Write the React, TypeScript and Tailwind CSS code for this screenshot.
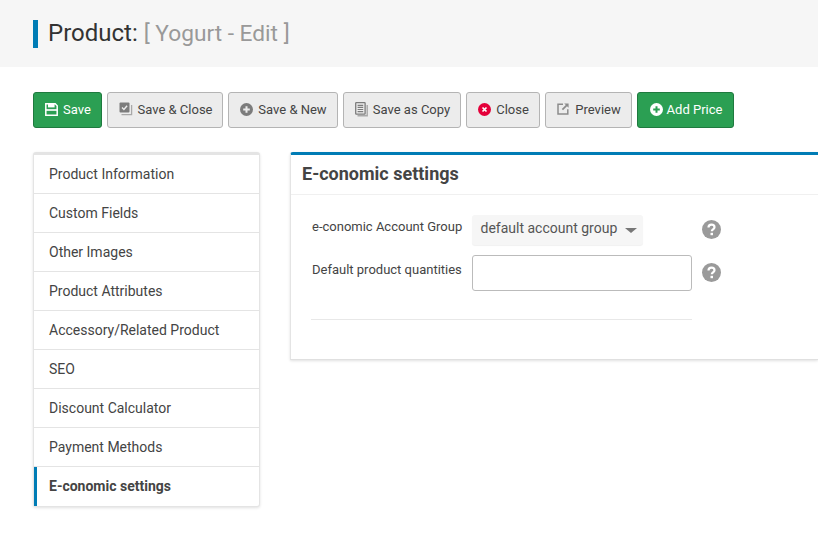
import React from "react";

const SaveIcon = () => (
  <svg width="13" height="13" viewBox="0 0 13 13" fill="none">
    <path d="M0.8 0.8h9.4l2 2v9.4H0.8z" stroke="currentColor" strokeWidth="1.5" />
    <path d="M3 1h6.6v3.4H3z" fill="currentColor" />
    <path d="M0.8 7h11.4" stroke="currentColor" strokeWidth="1.5" />
    <path d="M0 7h13" stroke="currentColor" strokeWidth="0.6" />
  </svg>
);
const SaveCloseIcon = () => (
  <svg width="14" height="14" viewBox="0 0 14 14" fill="none">
    <path d="M2.5 12.6h10.1V3" stroke="#a8a8a8" strokeWidth="1.3" />
    <rect x="0.5" y="0.5" width="10" height="10" rx="1" fill="#7c7c7c" />
    <path d="M3 5.6l1.9 1.9 3.2-3.8" stroke="#ececec" strokeWidth="1.4" />
  </svg>
);
const PlusCircle = ({ fg }: { fg: string }) => (
  <svg width="13" height="13" viewBox="0 0 13 13">
    <circle cx="6.5" cy="6.5" r="6.5" fill="currentColor" />
    <path d="M6.5 3.2v6.6M3.2 6.5h6.6" stroke={fg} strokeWidth="2" />
  </svg>
);
const CopyIcon = () => (
  <svg width="13" height="15" viewBox="0 0 13 15" fill="none">
    <path d="M2.5 13.8h9.7V3" stroke="#a8a8a8" strokeWidth="1.4" />
    <rect x="0.7" y="0.7" width="9.4" height="11.4" rx="0.6" fill="#ececec" stroke="#7c7c7c" strokeWidth="1.3" />
    <path d="M2.6 3.3h5.6M2.6 5.4h5.6M2.6 7.5h5.6M2.6 9.6h5.6" stroke="#7c7c7c" strokeWidth="1.2" />
  </svg>
);
const CloseIcon = () => (
  <svg width="13" height="13" viewBox="0 0 13 13">
    <circle cx="6.5" cy="6.5" r="6.5" fill="#e4003a" />
    <path d="M4.5 4.5l4 4M8.5 4.5l-4 4" stroke="#fff" strokeWidth="1.7" />
  </svg>
);
const PreviewIcon = () => (
  <svg width="12" height="12" viewBox="0 0 12 12" fill="none">
    <path d="M6 1.2H1v9.8h9.8V6.2" stroke="#8c8c8c" strokeWidth="1.5" />
    <path d="M7.2 0.4H11.6V4.8L10 3.2 6 7.2 4.8 6l4-4z" fill="#8c8c8c" />
  </svg>
);
const Help = () => (
  <svg width="19" height="19" viewBox="0 0 19 19" className="block">
    <circle cx="9.5" cy="9.5" r="9.5" fill="#9a9a9a" />
    <path d="M6.5 7.4c0-1.8 1.3-2.7 3-2.7s3 .9 3 2.5c0 2.1-2.7 2.2-2.7 4.1" fill="none" stroke="#fff" strokeWidth="2.2" />
    <rect x="8.5" y="12.8" width="2.5" height="2.4" fill="#fff" />
  </svg>
);

const buttons = [
  { label: "Save", icon: <span className="text-white"><SaveIcon /></span>, green: true, w: "w-[69px]", gap: "gap-[6px]" },
  { label: "Save & Close", icon: <SaveCloseIcon />, w: "w-[116px]", gap: "gap-[6px]" },
  { label: "Save & New", icon: <span className="text-[#7c7c7c]"><PlusCircle fg="#ececec" /></span>, w: "w-[110px]", gap: "gap-[6px]" },
  { label: "Save as Copy", icon: <CopyIcon />, w: "w-[118px]", gap: "gap-[6px]" },
  { label: "Close", icon: <CloseIcon />, w: "w-[74px]", gap: "gap-[6px]" },
  { label: "Preview", icon: <PreviewIcon />, w: "w-[87px]", gap: "gap-[7px]" },
  { label: "Add Price", icon: <span className="text-white"><PlusCircle fg="#2b9f53" /></span>, green: true, w: "w-[97px]", gap: "gap-[5px]" },
];

const tabs = [
  "Product Information",
  "Custom Fields",
  "Other Images",
  "Product Attributes",
  "Accessory/Related Product",
  "SEO",
  "Discount Calculator",
  "Payment Methods",
];

export default function App() {
  return (
    <div className="min-h-[535px] overflow-hidden bg-white font-['Roboto',sans-serif] text-[#444]">
      <header className="flex h-[67px] items-center bg-[#f6f6f6] pl-[33px]">
        <div className="h-7 w-[5px] bg-[#007cb5]" />
        <h1 className="ml-[10px] text-2xl leading-7 text-[#333]">
          Product: <span className="text-[22.7px] text-[#999]">[ Yogurt - Edit ]</span>
        </h1>
      </header>

      <div className="mt-[25px] flex gap-[5px] pl-[33px]">
        {buttons.map((b) => (
          <button
            key={b.label}
            className={`flex h-9 items-center justify-center rounded-[3px] border text-[13px] [&_svg]:translate-x-px [&_svg]:-translate-y-px ${b.gap} ${b.w} ${
              b.green
                ? "border-[#1f7a3f] bg-[#2b9f53] text-white"
                : "border-[#b4b4b4] bg-[#ececec] text-[#444]"
            }`}
          >
            {b.icon}
            {b.label}
          </button>
        ))}
      </div>

      <div className="mt-6 flex items-start gap-[30px] pl-[33px]">
        <nav className="w-[227px] shrink-0 rounded-[3px] border-x border-b border-t-[3px] border-[#e4e4e4] bg-white shadow-[0_1px_3px_rgba(0,0,0,0.12)]">
          {tabs.map((t) => (
            <div key={t} className="flex h-[39px] items-center border-b border-[#e4e4e4] pl-[15px] text-sm">
              {t}
            </div>
          ))}
          <div className="flex h-[39px] items-center border-l-[3px] border-[#007cb5] pb-[2px] pl-3 text-sm font-bold">
            E-conomic settings
          </div>
        </nav>

        <section className="h-[208px] flex-1 rounded-tl-[3px] border-b border-l border-t-[3px] border-b-[#e0e0e0] border-l-[#e4e4e4] border-t-[#007cb5] bg-white shadow-[0_1px_3px_rgba(0,0,0,0.12)]">
          <h2 className="flex h-[40px] items-center border-b border-[#f0f0f0] pb-[2px] pl-[11px] text-lg font-bold leading-none">
            E-conomic settings
          </h2>
          <div className="pl-5 pt-5">
            <div className="flex items-start">
              <label className="ml-px w-[160px] pt-[4px] text-[13px] leading-[16px]">e-conomic Account Group</label>
              <div className="flex h-[30px] w-[171px] items-center justify-between rounded-[3px] bg-[#f6f6f6] pl-[8.5px] pr-[6px] text-sm shadow-[0_1px_1px_rgba(0,0,0,0.06)]">
                <span className="-mt-[4px] text-[#555]">default account group</span>
                <span className="h-0 w-0 border-x-[6px] border-t-[5px] border-x-transparent border-t-[#777]" />
              </div>
              <span className="ml-[59px] mt-[5px]"><Help /></span>
            </div>
            <div className="mt-[10px] flex items-start">
              <label className="ml-px w-[160px] pt-[7px] text-[13px] leading-[16px]">Default product quantities</label>
              <input className="h-9 w-[220px] shrink-0 rounded-[3px] border border-[#bbb] bg-white" />
              <span className="ml-[10px] mt-[8px]"><Help /></span>
            </div>
            <div className="mt-7 h-px w-[381px] bg-[#e8e8e8]" />
          </div>
        </section>
      </div>
    </div>
  );
}
